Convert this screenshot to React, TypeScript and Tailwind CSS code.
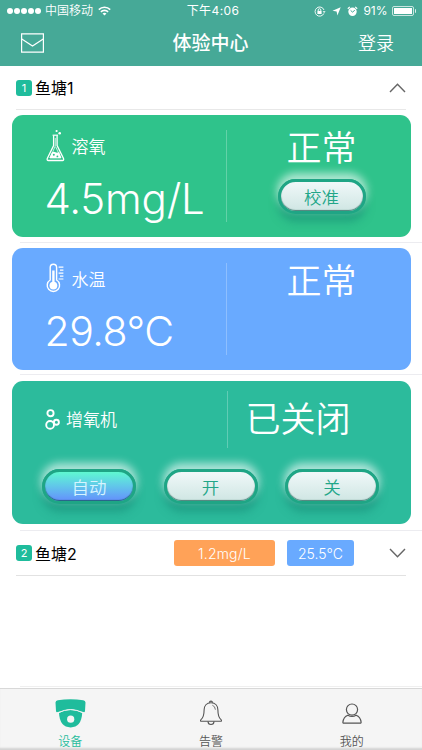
import type { ReactNode } from "react";
import clsx from "clsx";

const STATUS_DOTS = [0, 1, 2, 3, 4];

const TABS = [
  { label: "设备", icon: <CameraIcon />, active: true },
  { label: "告警", icon: <BellIcon />, active: false },
  { label: "我的", icon: <UserIcon />, active: false },
];

function WifiIcon() {
  return (
    <svg className="ml-[5px] h-[10px] w-[13px]" viewBox="0 0 13 10" fill="none" stroke="white" strokeWidth="1.6">
      <path d="M0.8 3.6a8.2 8.2 0 0 1 11.4 0" />
      <path d="M2.9 5.9a5.1 5.1 0 0 1 7.2 0" />
      <path d="M6.5 9.6 4.5 7.6a2.9 2.9 0 0 1 4 0Z" fill="white" stroke="none" />
    </svg>
  );
}

function RotationLockIcon() {
  return (
    <svg className="h-[11px] w-[12px]" viewBox="0 0 12 11" fill="none" stroke="white">
      <path d="M9.9 7.4A4.6 4.6 0 1 1 10 4" strokeWidth="0.9" />
      <path d="M8.6 5.2h3L10.1 7Z" fill="white" stroke="none" />
      <rect x="3.4" y="4.9" width="4.2" height="3.1" fill="white" stroke="none" />
      <path d="M4.2 5V4a1.3 1.3 0 0 1 2.6 0v1" strokeWidth="0.9" />
    </svg>
  );
}

function AlarmIcon() {
  return (
    <svg className="h-[11px] w-[11px]" viewBox="0 0 11 11">
      <circle cx="5.5" cy="5.8" r="4.2" fill="white" />
      <path d="M0.8 2.8 2.8 0.9M8.2 0.9l2 1.9" stroke="white" strokeWidth="1.2" />
      <path d="M3.6 4.4 5.5 6.1 7.8 4.3" fill="none" stroke="#46a997" strokeWidth="1" />
    </svg>
  );
}

function FlaskIcon() {
  return (
    <svg className="h-[33px] w-[19px]" viewBox="0 0 19 33" fill="none" stroke="white">
      <circle cx="10.6" cy="2" r="1.1" fill="white" stroke="none" />
      <circle cx="13.7" cy="4.2" r="1.3" fill="white" stroke="none" />
      <path d="M6.6 6.2h5.4" strokeWidth="1.2" />
      <path d="M7.6 6.5v10L1.3 29.4q-.6 2.1 1 2.1h14.2q1.6 0 1-2.1L11.1 16.5v-10" strokeWidth="1.3" />
      <path d="M9.3 9v8L4 29h10.8L9.8 18" strokeWidth="0.7" />
      <path d="M5.8 23.4q2-1.3 3.7-.2t3.6-.3L15.4 29H3.4Z" fill="white" stroke="none" />
      <circle cx="7.8" cy="25.8" r="1" fill="#2fc38b" stroke="none" />
      <circle cx="11.4" cy="27.4" r="0.9" fill="#2fc38b" stroke="none" />
    </svg>
  );
}

function ThermometerIcon() {
  return (
    <svg className="h-[30px] w-[18px]" viewBox="0 0 18 30" fill="none" stroke="white">
      <path d="M4.2 17V4.4a3.2 3.2 0 0 1 6.4 0V17a6.2 6.2 0 1 1-6.4 0Z" strokeWidth="1.4" />
      <path d="M7.4 7.5v13" strokeWidth="2.4" />
      <circle cx="7.4" cy="22.6" r="3.9" fill="white" stroke="none" />
      <path d="M12.6 4.2h4.8M14 7.2h3.4M12.6 10.2h4.8M14 13.2h3.4M12.6 16h4.8" strokeWidth="1.2" />
    </svg>
  );
}

function BubblesIcon() {
  return (
    <svg className="h-[21px] w-[15px]" viewBox="0 0 15 21" fill="none" stroke="white" strokeWidth="1.9">
      <circle cx="5.5" cy="4.2" r="3.1" />
      <circle cx="5.1" cy="15.9" r="3.9" />
      <circle cx="11.4" cy="13.2" r="2.5" />
    </svg>
  );
}

function CameraIcon() {
  return (
    <svg className="h-[29px] w-[31px]" viewBox="0 0 31 29">
      <path
        d="M2.8 1.3Q15.5-.7 28.2 1.3q2.2.3 2.3 2.2l-.5 8.4q-.1 1.4-1.5 1.2-3.6-.5-6.5-1.7-6.5-2.4-13 0-2.9 1.2-6.5 1.7-1.4.2-1.5-1.2L.5 3.5Q.6 1.6 2.8 1.3Z"
        fill="#1fbc9c"
      />
      <path d="M4 14.1Q15.6 7.6 27.2 14.1 26.4 28.4 15.6 28.4T4 14.1Z" fill="#1fbc9c" />
      <path d="M2.5 13.9Q9.5 10.6 15.6 10.6t13.1 3.3" fill="none" stroke="#f5f5f5" strokeWidth="1" />
      <circle cx="15.7" cy="20.2" r="3.6" fill="#f5f5f5" />
    </svg>
  );
}

function BellIcon() {
  return (
    <svg className="h-[26px] w-[24px]" viewBox="0 0 24 26" fill="none" stroke="#555" strokeWidth="1.1">
      <path d="M12 2.7c-4.4 0-6.9 3.2-6.9 7.3 0 4.9-.7 7.6-3.1 9.7-.8.7-.6 1.6.4 1.6h19.2c1 0 1.2-.9.4-1.6-2.4-2.1-3.1-4.8-3.1-9.7 0-4.1-2.5-7.3-6.9-7.3Z" />
      <path d="M10.4 2.7a1.6 1.6 0 1 1 3.2 0" />
      <path d="M9 21.5a3 3 0 0 0 6 0" />
      <path d="M13.4 5.3q2.7.8 3 4.4" strokeWidth="0.8" />
    </svg>
  );
}

function UserIcon() {
  return (
    <svg className="h-[21px] w-[20px]" viewBox="0 0 20 21" fill="none" stroke="#555" strokeWidth="1.2">
      <circle cx="10" cy="6.6" r="5.6" />
      <path d="M5.9 12.2Q10 14.8 14.1 12.2q4.4 1.6 5 6.9.1 1.1-.8 1.1H1.7q-.9 0-.8-1.1.6-5.3 5-6.9Z" />
    </svg>
  );
}

function Chevron({ up = false }: { up?: boolean }) {
  return (
    <svg className={clsx("h-[10px] w-[17px]", up && "rotate-180")} viewBox="0 0 17 10" fill="none">
      <path d="M1 1 8.5 8.8 16 1" stroke="#666" strokeWidth="1.4" />
    </svg>
  );
}

function PillButton({ children, active = false, className }: { children: ReactNode; active?: boolean; className: string }) {
  return (
    <button
      className={clsx(
        "flex h-[35px] items-center justify-center rounded-full border-[3px] border-[#1fa585] pt-[3px] text-[17.5px] font-[350] leading-none",
        "shadow-[0_-5px_8px_1px_rgba(255,255,255,0.62),0_8px_9px_rgba(20,135,115,0.5),inset_0_-1px_1px_rgba(0,70,60,0.65)]",
        active
          ? "bg-linear-to-b from-[#5ff8d0] to-[#648efc] text-[#d5f4ff]"
          : "bg-linear-to-b from-[#f0f8f9] to-[#cfe6e3] text-[#22a688]",
        className,
      )}
    >
      {children}
    </button>
  );
}

function PondBadge({ number }: { number: number }) {
  return (
    <span className="flex size-4 items-center justify-center rounded-[3px] bg-[#1fbc9c] pt-px text-[11px] leading-none text-white">
      {number}
    </span>
  );
}

function Metric({ icon, name, value, valueClass }: { icon: ReactNode; name: string; value: string; valueClass: string }) {
  return (
    <div className="flex w-[214px] flex-col pl-[34px]">
      <div className="flex h-[34px] items-center">
        {icon}
        <span className="ml-auto w-[154px] pt-[3px] text-[17px] font-[350] leading-[34px]">{name}</span>
      </div>
      <div className={clsx("-ml-px whitespace-nowrap font-[350] leading-[50px]", valueClass)}>{value}</div>
    </div>
  );
}

export default function App() {
  return (
    <div className="flex h-[750px] w-[422px] flex-col overflow-hidden bg-white font-['Inter','Noto_Sans_CJK_SC',sans-serif] text-black">
      <header className="h-[66px] shrink-0 bg-[#46a997] text-white">
        {/* Status bar */}
        <div className="grid h-[22px] grid-cols-[1fr_auto_1fr] items-center pl-[7px] pr-[6px] text-[12px] leading-none">
          <div className="flex items-center">
            <div className="flex gap-[1px]">
              {STATUS_DOTS.map((dot) => (
                <i key={dot} className="size-[6px] rounded-full bg-white" />
              ))}
            </div>
            <span className="ml-[4px] text-[12px] font-[350]">中国移动</span>
            <WifiIcon />
          </div>
          <span className="ml-[3px] tracking-[0.4px]">下午4:06</span>
          <div className="flex items-center justify-end">
            <RotationLockIcon />
            <svg className="ml-[6px] mr-[6px] size-[9px]" viewBox="0 0 9 9">
              <path d="M8.7.3 5.4 8.5 4.6 4.6.5 3.7Z" fill="white" />
            </svg>
            <AlarmIcon />
            <span className="ml-[5px] text-[12px]">91%</span>
            <div className="ml-[4px] h-[10px] w-[22px] rounded-[2px] border border-white/70 p-px">
              <div className="h-full w-[18px] bg-white" />
            </div>
            <i className="ml-px h-[4px] w-[1.5px] rounded-r bg-white/80" />
          </div>
        </div>
        {/* Navigation bar */}
        <div className="grid h-[44px] grid-cols-[1fr_auto_1fr] items-center pb-[2px] pl-[21px] pr-[28px]">
          <svg className="h-[20px] w-[23px]" viewBox="0 0 23 20" fill="none" stroke="white" strokeWidth="1.2">
            <path d="M.6.8h21.8v18.4H.6Z" />
            <path d="M.8 6 11.5 13 22.2 6" />
          </svg>
          <h1 className="ml-[6px] text-[19px] font-medium leading-none">体验中心</h1>
          <span className="pt-[2px] text-right text-[18px] font-[350] leading-none">登录</span>
        </div>
      </header>

      <section className="ml-4 mr-4 flex h-[44px] shrink-0 items-center border-b border-[#e8e8e8]">
        <PondBadge number={1} />
        <span className="ml-[3px] pt-px text-[16px]">鱼塘1</span>
        <div className="ml-auto">
          <Chevron up />
        </div>
      </section>

      <main className="shrink-0 text-white">
        <div className="pt-[5px]">
          <article className="ml-[11.5px] mr-[11.5px] flex h-[122px] rounded-[11px] bg-[#2fc38b] pt-[13px]">
            <Metric icon={<FlaskIcon />} name="溶氧" value="4.5mg/L" valueClass="mt-[12px] text-[42px] tracking-[-0.2px]" />
            <div className="mt-[2px] h-[92px] w-px bg-white/25" />
            <div className="ml-[51px] flex w-[88px] flex-col items-center">
              <span className="text-[35px] font-[350] leading-[40px]">正常</span>
              <PillButton className="mt-[11px] w-[88px] shrink-0">校准</PillButton>
            </div>
          </article>
        </div>
        <div className="ml-5 mt-[5px] h-px bg-[#ececf0]" />

        <article className="ml-[11.5px] mr-[11.5px] mt-[5px] flex h-[122px] rounded-[11px] bg-[#69aaff] pt-[13px]">
          <Metric icon={<ThermometerIcon />} name="水温" value="29.8°C" valueClass="mt-[11px] text-[41px] tracking-[-0.5px]" />
          <div className="mt-[2px] h-[92px] w-px bg-white/25" />
          <div className="ml-[51px] w-[88px] text-center text-[35px] font-[350] leading-[40px]">正常</div>
        </article>
        <div className="ml-5 mt-[4px] h-px bg-[#ececf0]" />

        <article className="ml-[11.5px] mr-[11.5px] mt-[6px] h-[143px] rounded-[11px] bg-[#2cbb9c] pt-[9px]">
          <div className="flex h-[59px]">
            <div className="flex w-[215px] items-center pl-[33px]">
              <BubblesIcon />
              <span className="ml-[6.5px] pt-[2px] text-[17px] font-[350]">增氧机</span>
            </div>
            <div className="mt-px h-[57px] w-px bg-white/25" />
            <div className="ml-[18px] text-[35px] font-[350] leading-[59px]">已关闭</div>
          </div>
          <div className="mt-[20px] flex justify-between pl-[30.5px] pr-[31.5px]">
            <PillButton active className="w-[94px]">自动</PillButton>
            <PillButton className="w-[94px]">开</PillButton>
            <PillButton className="w-[94px]">关</PillButton>
          </div>
        </article>
        <div className="ml-5 mt-[6px] h-px bg-[#ececf0]" />
      </main>

      <section className="ml-4 mr-4 flex h-[45px] shrink-0 items-center border-b border-[#e2e2e2]">
        <PondBadge number={2} />
        <span className="ml-[3px] pt-px text-[16px]">鱼塘2</span>
        <span className="ml-auto flex h-[26px] w-[101px] items-center justify-center rounded-[3px] bg-[#ffa258] text-[14px] font-light tracking-[0.2px] text-white">
          1.2mg/L
        </span>
        <span className="ml-[12px] flex h-[26px] w-[67px] items-center justify-center rounded-[3px] bg-[#69aaff] text-[14px] font-light text-white">
          25.5°C
        </span>
        <div className="ml-[35px]">
          <Chevron />
        </div>
      </section>

      <div className="ml-5 mt-auto h-px shrink-0 bg-[#efefef]" />
      <nav className="mt-px grid h-[62px] shrink-0 grid-cols-3 border-t border-[#d8d8d8] bg-[#f5f5f5] shadow-[inset_0_-3px_2px_-1px_#d2d2d2]">
        {TABS.map((tab) => (
          <a
            key={tab.label}
            className={clsx(
              "flex flex-col items-center text-[12px] font-[350] leading-none",
              tab.active ? "text-[#1fbc9c]" : "text-[#555]",
            )}
          >
            <div className="flex h-[47px] items-center pt-px">{tab.icon}</div>
            {tab.label}
          </a>
        ))}
      </nav>
    </div>
  );
}
